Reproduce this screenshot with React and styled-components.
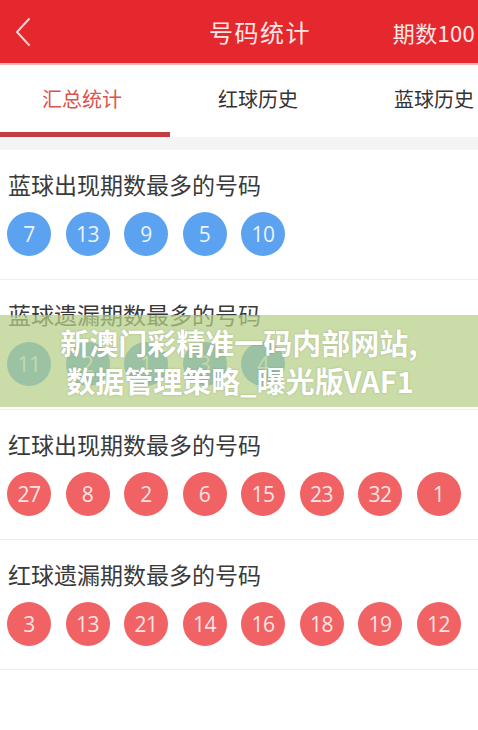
import React from "react"
import styled, { createGlobalStyle } from "styled-components"

const GlobalStyle = createGlobalStyle`
  html, body {
    margin: 0;
    padding: 0;
    background: #ffffff;
  }
  body {
    font-family: "Noto Sans CJK SC", "Noto Sans", sans-serif;
    color: #333333;
  }
`

const Page = styled.div`
  position: relative;
  width: 478px;
  min-height: 730px;
  overflow: hidden;
  background: #ffffff;
`

const Header = styled.header`
  display: flex;
  align-items: center;
  height: 63px;
  padding: 0 3px 0 15px;
  background: #e4282d;
  border-bottom: 2px solid #f3b6b6;
`

const BackButton = styled.div`
  display: flex;
  align-items: center;
  width: 120px;
`

const Title = styled.h1`
  flex: 1;
  margin: 0;
  padding-right: 8px;
  text-align: center;
  font-size: 24px;
  font-weight: 400;
  letter-spacing: 1.5px;
  color: #fde6e6;
`

const Periods = styled.div`
  font-size: 22px;
  color: #fde6e6;
  letter-spacing: 0.3px;
`

const Tabs = styled.nav`
  display: flex;
  height: 72px;
  background: #ffffff;
`

const Tab = styled.div`
  flex: 0 0 176px;
  display: flex;
  flex-direction: column;
  justify-content: flex-end;
`

const TabLabel = styled.span`
  flex: 1;
  display: flex;
  align-items: center;
  justify-content: center;
  padding-right: 12px;
  font-size: 20px;
  white-space: nowrap;
  color: ${p => (p.$active ? "#d9534f" : "#333333")};
`

const Indicator = styled.div`
  width: 170px;
  height: 5px;
  background: ${p => (p.$active ? "#c33c41" : "transparent")};
`

const Gap = styled.div`
  height: 13px;
  background: #f4f4f4;
`

const Section = styled.section`
  padding: 20px 0 23px 7px;
  border-bottom: 1px solid #efefef;
`

const SectionTitle = styled.h2`
  margin: 0 0 14px 1px;
  font-size: 23px;
  line-height: 28px;
  font-weight: 400;
  color: #3a3a3a;
`

const Balls = styled.div`
  display: flex;
  gap: 14.5px;
`

const Ball = styled.div`
  width: 44px;
  height: 44px;
  border-radius: 50%;
  display: flex;
  align-items: center;
  justify-content: center;
  background: ${p => (p.$color === "blue" ? "#5ba2f0" : "#f06263")};
  color: ${p => (p.$color === "blue" ? "#eaf4ff" : "#fde4e4")};
  font-family: "Open Sans", "Noto Sans", sans-serif;
  font-size: 21px;
  font-weight: 400;
  letter-spacing: -0.5px;
`

const Overlay = styled.div`
  position: absolute;
  left: 0;
  right: 0;
  top: 315px;
  height: 92px;
  display: flex;
  flex-direction: column;
  align-items: center;
  justify-content: center;
  background: rgba(182, 206, 134, 0.72);
`

const OverlayLine = styled.div`
  font-size: 29px;
  line-height: 38px;
  font-weight: 700;
  color: #ffffff;
  white-space: nowrap;
  text-shadow: 0 0 2px rgba(80, 90, 60, 0.35);
  margin-left: ${p => p.$shift || 0}px;
`

const sections = [
  { title: "蓝球出现期数最多的号码", color: "blue", numbers: [7, 13, 9, 5, 10] },
  { title: "蓝球遗漏期数最多的号码", color: "blue", numbers: [11, 2, 1, 3, 4] },
  { title: "红球出现期数最多的号码", color: "red", numbers: [27, 8, 2, 6, 15, 23, 32, 1] },
  { title: "红球遗漏期数最多的号码", color: "red", numbers: [3, 13, 21, 14, 16, 18, 19, 12] },
]

const tabs = ["汇总统计", "红球历史", "蓝球历史"]

const ChevronLeft = () => (
  <svg width="18" height="30" viewBox="0 0 18 30">
    <polyline
      points="14,2 2,15 14,28"
      fill="none"
      stroke="#f8d2d2"
      strokeWidth="2"
      strokeLinecap="round"
      strokeLinejoin="round"
    />
  </svg>
)

const App = () => {
  return (
    <Page>
      <GlobalStyle />
      <Header>
        <BackButton>
          <ChevronLeft />
        </BackButton>
        <Title>号码统计</Title>
        <Periods>期数100</Periods>
      </Header>

      <Tabs>
        {tabs.map((t, i) => (
          <Tab key={t}>
            <TabLabel $active={i === 0}>{t}</TabLabel>
            <Indicator $active={i === 0} />
          </Tab>
        ))}
      </Tabs>
      <Gap />

      {sections.map(s => (
        <Section key={s.title}>
          <SectionTitle>{s.title}</SectionTitle>
          <Balls>
            {s.numbers.map(n => (
              <Ball key={n} $color={s.color}>
                {n}
              </Ball>
            ))}
          </Balls>
        </Section>
      ))}

      <Overlay>
        <OverlayLine>新澳门彩精准一码内部网站,</OverlayLine>
        <OverlayLine $shift={2}>数据管理策略_曝光版VAF1</OverlayLine>
      </Overlay>
    </Page>
  )
}

export default App
